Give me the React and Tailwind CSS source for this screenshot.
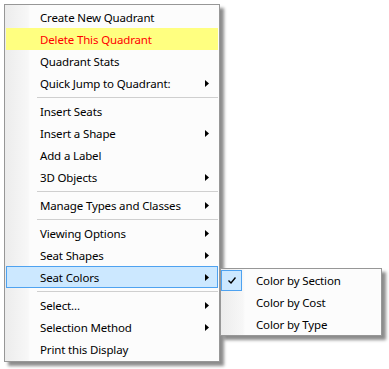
import React from 'react';

const mainItems = [
  { label: 'Create New Quadrant' },
  { label: 'Delete This Quadrant', danger: true },
  { label: 'Quadrant Stats' },
  { label: 'Quick Jump to Quadrant:', sub: true },
  { sep: true },
  { label: 'Insert Seats' },
  { label: 'Insert a Shape', sub: true },
  { label: 'Add a Label' },
  { label: '3D Objects', sub: true },
  { sep: true },
  { label: 'Manage Types and Classes', sub: true },
  { sep: true },
  { label: 'Viewing Options', sub: true },
  { label: 'Seat Shapes', sub: true },
  { label: 'Seat Colors', sub: true, open: true },
  { sep: true },
  { label: 'Select...', sub: true },
  { label: 'Selection Method', sub: true },
  { label: 'Print this Display' },
];

const colorItems = [
  { label: 'Color by Section', checked: true },
  { label: 'Color by Cost' },
  { label: 'Color by Type' },
];

const Arrow = () => (
  <svg width="4" height="7" viewBox="0 0 4 7" className="shrink-0">
    <path d="M0 0 L4 3.5 L0 7 Z" fill="#000" />
  </svg>
);

const MenuRow = ({ item }) => {
  if (item.sep) {
    return (
      <div className="h-[6px] pl-[31px] pt-[3px]">
        <div className="h-px bg-[#cfcfcf]" />
      </div>
    );
  }
  let rowClass = 'border-transparent';
  if (item.danger) rowClass = 'border-[#ffff80] bg-[#ffff80]';
  if (item.open) rowClass = 'border-[#4ea2f0] bg-[#cce8ff]';
  return (
    <div className={`flex h-[22px] items-center border pl-[33px] pr-[8px] ${rowClass}`}>
      <span className={`flex-1 pt-px ${item.danger ? 'text-[#ff0000]' : 'text-black'}`}>{item.label}</span>
      {item.sub && <Arrow />}
    </div>
  );
};

export default function App() {
  return (
    <div className="h-[369px] w-[389px] overflow-hidden bg-white text-[11.5px] leading-none tracking-[-0.15px] [font-family:'Noto_Sans',sans-serif]">
      <div className="flex items-start pl-1 pt-1">
        {/* main context menu */}
        <div className="w-[216px] border border-[#979797] bg-[linear-gradient(90deg,#ececec,#f7f7f7_23px,#fcfcfc_25px)] px-px py-px shadow-[4px_4px_3px_rgba(0,0,0,0.45)]">
          {mainItems.map((item, i) => (
            <MenuRow key={i} item={item} />
          ))}
        </div>
        {/* Seat Colors submenu */}
        <div className="mt-[264px] w-[162px] border border-[#979797] bg-[linear-gradient(90deg,#ececec,#f7f7f7_22px,#fcfcfc_24px)] shadow-[4px_4px_3px_rgba(0,0,0,0.45)]">
          {colorItems.map((item) => (
            <div key={item.label} className="flex h-[22px] items-center">
              <div className="flex h-[22px] w-[21px] shrink-0 items-center justify-center">
                {item.checked && (
                  <div className="flex h-[21px] w-[21px] items-center justify-center border border-[#4ea2f0] bg-[#cce8ff]">
                    <svg width="8" height="7" viewBox="0 0 8 7">
                      <path d="M0.5 3.5 L3 6 L7.5 0.5" fill="none" stroke="#000" strokeWidth="1.4" />
                    </svg>
                  </div>
                )}
              </div>
              <span className="pl-[14px] pt-px text-black">{item.label}</span>
            </div>
          ))}
        </div>
      </div>
    </div>
  );
}
